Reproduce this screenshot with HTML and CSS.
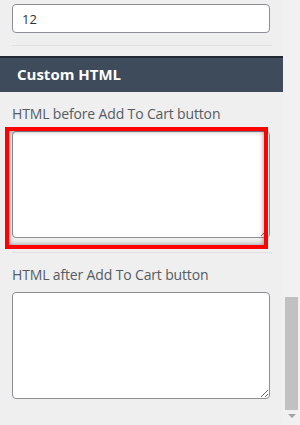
FILE: index.html
```html
<!DOCTYPE html>
<html lang="en">
<head>
    <meta charset="UTF-8">
    <meta name="viewport" content="width=device-width, initial-scale=1.0">
    <title>Custom HTML</title>
    <link rel="stylesheet" href="styles.css">
</head>
<body>
    <div class="wrap">
        <div class="panel">
            <div class="field">
                <input type="text" class="text-input" value="12">
            </div>
            <hr class="sep">
            <h2 class="section-title">Custom HTML</h2>
            <div class="field field-area">
                <label class="field-label">HTML before Add To Cart button</label>
                <textarea class="area"></textarea>
                <div class="highlight"></div>
            </div>
            <hr class="sep sep-low">
            <div class="field field-area">
                <label class="field-label">HTML after Add To Cart button</label>
                <textarea class="area"></textarea>
            </div>
        </div>
        <div class="scrollbar">
            <div class="thumb"></div>
            <div class="arrow"></div>
        </div>
    </div>
</body>
</html>
```

FILE: styles.css
```css
body {
    margin: 0;
    padding: 0;
    width: 300px;
    height: 425px;
    overflow: hidden;
    background-color: #efefef;
    font-family: "Open Sans", Arial, sans-serif;
}
.wrap {
    display: flex;
    height: 425px;
}
.panel {
    width: 283px;
    padding-top: 4px;
    box-sizing: border-box;
}
.field {
    padding-left: 12px;
}
.text-input {
    display: block;
    width: 258px;
    height: 29px;
    box-sizing: border-box;
    border: 1px solid #8c8f94;
    border-radius: 4px;
    background: #fff;
    padding: 0 9px;
    font-family: "Open Sans", Arial, sans-serif;
    font-size: 13px;
    color: #2c3338;
}
.sep {
    margin: 12px 11px 0 12px;
    border: none;
    border-top: 1px solid #e0e0e0;
    height: 0;
}
.section-title {
    margin: 10px 0 0;
    height: 36px;
    box-sizing: border-box;
    border-top: 2px solid #1f2933;
    background-color: #3d4b5a;
    color: #fff;
    font-size: 15px;
    font-weight: 700;
    line-height: 32px;
    padding-left: 17px;
}
.field-area {
    position: relative;
    padding-top: 13px;
}
.field-label {
    display: block;
    font-size: 14px;
    letter-spacing: -0.15px;
    line-height: 18px;
    color: #555c63;
    margin-bottom: 8px;
}
.area {
    display: block;
    width: 258px;
    height: 107px;
    box-sizing: border-box;
    border: 1px solid #8c8f94;
    border-radius: 4px;
    background: #fff;
    resize: both;
    margin: 0;
}
.highlight {
    position: absolute;
    left: 5px;
    top: 35px;
    width: 263px;
    height: 122px;
    box-sizing: border-box;
    border: 4px solid #f00;
    box-shadow: inset 0 0 5px rgba(0, 0, 0, 0.45);
}
.sep-low {
    margin-top: 14px;
}
.scrollbar {
    width: 17px;
    background-color: #f1f1f1;
    position: relative;
}
.thumb {
    margin: 297px 2px 0;
    height: 113px;
    background-color: #c1c1c1;
}
.arrow {
    margin: 4px auto 0;
    width: 0;
    height: 0;
    border-left: 4px solid transparent;
    border-right: 4px solid transparent;
    border-top: 4px solid #a3a3a3;
}
```
